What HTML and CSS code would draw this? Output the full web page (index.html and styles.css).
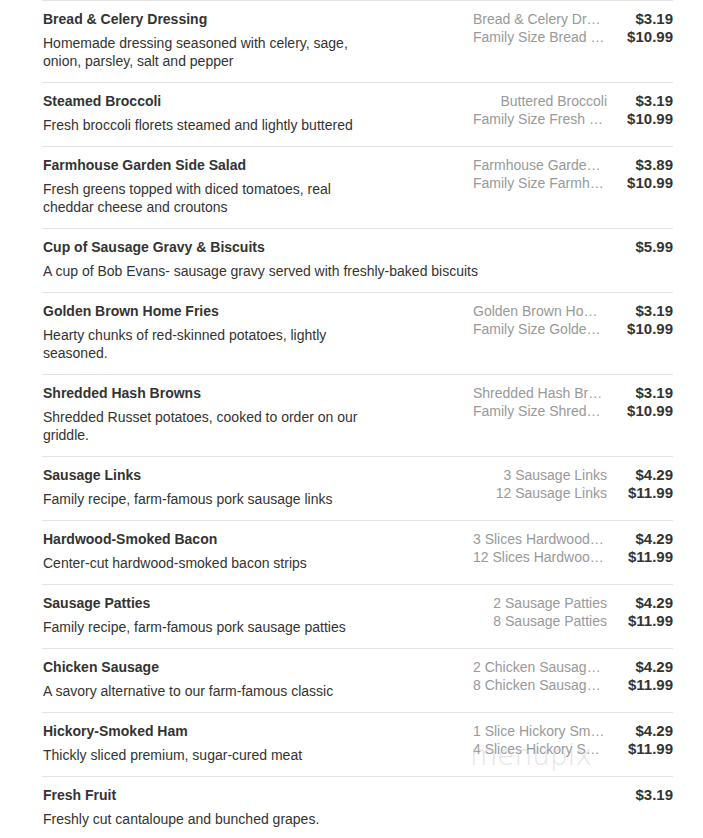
FILE: index.html
```html
<!DOCTYPE html>
<html>
<head>
<meta charset="utf-8">
<link rel="stylesheet" href="styles.css">
</head>
<body>
<div class="menu">
  <div class="item">
    <div class="info narrow">
      <div class="title">Bread &amp; Celery Dressing</div>
      <div class="desc">Homemade dressing seasoned with celery, sage, onion, parsley, salt and pepper</div>
    </div>
    <div class="options">
      <div class="opt">Bread &amp; Celery Dressing</div>
      <div class="opt">Family Size Bread &amp; Celery Dressing</div>
    </div>
    <div class="prices"><div>$3.19</div><div>$10.99</div></div>
  </div>
  <div class="item">
    <div class="info narrow">
      <div class="title">Steamed Broccoli</div>
      <div class="desc">Fresh broccoli florets steamed and lightly buttered</div>
    </div>
    <div class="options">
      <div class="opt">Buttered Broccoli</div>
      <div class="opt">Family Size Fresh Broccoli</div>
    </div>
    <div class="prices"><div>$3.19</div><div>$10.99</div></div>
  </div>
  <div class="item">
    <div class="info narrow">
      <div class="title">Farmhouse Garden Side Salad</div>
      <div class="desc">Fresh greens topped with diced tomatoes, real cheddar cheese and croutons</div>
    </div>
    <div class="options">
      <div class="opt">Farmhouse Garden Side Salad</div>
      <div class="opt">Family Size Farmhouse Salad</div>
    </div>
    <div class="prices"><div>$3.89</div><div>$10.99</div></div>
  </div>
  <div class="item">
    <div class="info">
      <div class="title">Cup of Sausage Gravy &amp; Biscuits</div>
      <div class="desc">A cup of Bob Evans- sausage gravy served with freshly-baked biscuits</div>
    </div>
    <div class="prices"><div>$5.99</div></div>
  </div>
  <div class="item">
    <div class="info narrow">
      <div class="title">Golden Brown Home Fries</div>
      <div class="desc">Hearty chunks of red-skinned potatoes, lightly seasoned.</div>
    </div>
    <div class="options">
      <div class="opt">Golden Brown Home Fries</div>
      <div class="opt">Family Size Golden Brown Home Fries</div>
    </div>
    <div class="prices"><div>$3.19</div><div>$10.99</div></div>
  </div>
  <div class="item">
    <div class="info narrow">
      <div class="title">Shredded Hash Browns</div>
      <div class="desc">Shredded Russet potatoes, cooked to order on our griddle.</div>
    </div>
    <div class="options">
      <div class="opt">Shredded Hash Browns</div>
      <div class="opt">Family Size Shredded Hash Browns</div>
    </div>
    <div class="prices"><div>$3.19</div><div>$10.99</div></div>
  </div>
  <div class="item">
    <div class="info narrow">
      <div class="title">Sausage Links</div>
      <div class="desc">Family recipe, farm-famous pork sausage links</div>
    </div>
    <div class="options">
      <div class="opt">3 Sausage Links</div>
      <div class="opt">12 Sausage Links</div>
    </div>
    <div class="prices"><div>$4.29</div><div>$11.99</div></div>
  </div>
  <div class="item">
    <div class="info narrow">
      <div class="title">Hardwood-Smoked Bacon</div>
      <div class="desc">Center-cut hardwood-smoked bacon strips</div>
    </div>
    <div class="options">
      <div class="opt">3 Slices Hardwood Smoked Bacon</div>
      <div class="opt">12 Slices Hardwood-Smoked Bacon</div>
    </div>
    <div class="prices"><div>$4.29</div><div>$11.99</div></div>
  </div>
  <div class="item">
    <div class="info narrow">
      <div class="title">Sausage Patties</div>
      <div class="desc">Family recipe, farm-famous pork sausage patties</div>
    </div>
    <div class="options">
      <div class="opt">2 Sausage Patties</div>
      <div class="opt">8 Sausage Patties</div>
    </div>
    <div class="prices"><div>$4.29</div><div>$11.99</div></div>
  </div>
  <div class="item">
    <div class="info narrow">
      <div class="title">Chicken Sausage</div>
      <div class="desc">A savory alternative to our farm-famous classic</div>
    </div>
    <div class="options">
      <div class="opt">2 Chicken Sausage Links</div>
      <div class="opt">8 Chicken Sausage Links</div>
    </div>
    <div class="prices"><div>$4.29</div><div>$11.99</div></div>
  </div>
  <div class="item">
    <div class="info narrow">
      <div class="title">Hickory-Smoked Ham</div>
      <div class="desc">Thickly sliced premium, sugar-cured meat</div>
    </div>
    <div class="options">
      <div class="opt">1 Slice Hickory Smoked Ham</div>
      <div class="opt">4 Slices Hickory Smoked Ham</div>
    </div>
    <div class="prices"><div>$4.29</div><div>$11.99</div></div>
    <span class="watermark">menupix</span>
  </div>
  <div class="item">
    <div class="info">
      <div class="title">Fresh Fruit</div>
      <div class="desc">Freshly cut cantaloupe and bunched grapes.</div>
    </div>
    <div class="prices"><div>$3.19</div></div>
  </div>
</div>
</body>
</html>
```

FILE: styles.css
```css
html, body {
  margin: 0;
  padding: 0;
  background: #fff;
}
body {
  font-family: Arial, "Liberation Sans", sans-serif;
  font-size: 14px;
  line-height: 18px;
  color: #333;
}
.menu {
  margin-left: 42px;
  width: 631px;
}
.item {
  position: relative;
  display: flex;
  align-items: flex-start;
  border-top: 1px solid #e3e3e3;
  padding: 9px 0 12px 1px;
}
.info {
  flex: 1 1 auto;
  min-width: 0;
}
.info.narrow {
  flex: 0 1 322px;
  margin-right: auto;
}
.title {
  font-weight: bold;
  color: #333;
}
.desc {
  margin-top: 6px;
  color: #333;
}
.options {
  width: 134px;
  margin-left: auto;
  text-align: right;
  color: #999;
}
.opt {
  white-space: nowrap;
  overflow: hidden;
  text-overflow: ellipsis;
}
.prices {
  width: 55px;
  margin-left: 11px;
  text-align: right;
  font-weight: bold;
  font-size: 15px;
  color: #333;
}
.watermark {
  position: absolute;
  left: 428px;
  top: 26px;
  font-size: 28px;
  line-height: 34px;
  font-family: "DejaVu Sans", sans-serif;
  font-weight: 200;
  color: rgba(200, 200, 200, 0.5);
  letter-spacing: 0;
  pointer-events: none;
}
```
